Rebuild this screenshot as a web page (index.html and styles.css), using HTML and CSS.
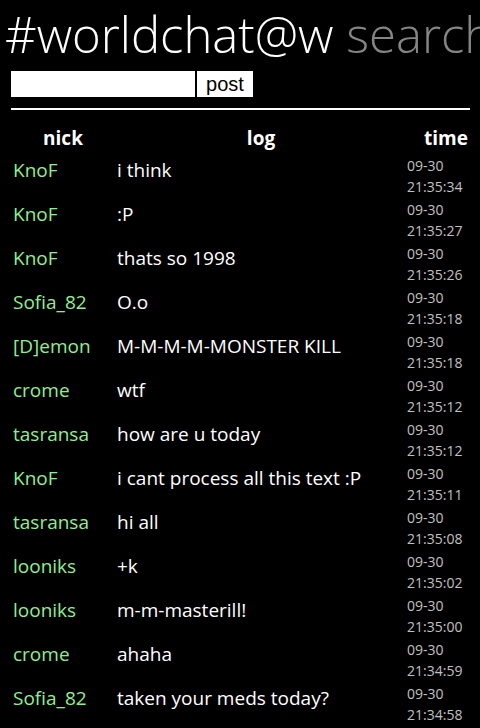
FILE: index.html
```html
<!DOCTYPE html>
<html lang="en">
<head>
  <meta charset="UTF-8">
  <title>#worldchat</title>
  <link rel="stylesheet" href="styles.css">
</head>
<body>
<div class="page">
  <h1 class="title">#worldchat@w <span class="dim">search</span></h1>
  <form class="postbar" onsubmit="return false">
    <input class="msg" type="text">
    <button class="post">post</button>
  </form>
  <hr class="rule">
  <table class="log">
    <thead>
      <tr><th class="c-nick">nick</th><th class="c-log">log</th><th class="c-time">time</th></tr>
    </thead>
    <tbody>
      <tr><td class="nick">KnoF</td><td class="text">i think</td><td class="time">09-30<br>21:35:34</td></tr>
      <tr><td class="nick">KnoF</td><td class="text">:P</td><td class="time">09-30<br>21:35:27</td></tr>
      <tr><td class="nick">KnoF</td><td class="text">thats so 1998</td><td class="time">09-30<br>21:35:26</td></tr>
      <tr><td class="nick">Sofia_82</td><td class="text">O.o</td><td class="time">09-30<br>21:35:18</td></tr>
      <tr><td class="nick">[D]emon</td><td class="text">M-M-M-M-MONSTER KILL</td><td class="time">09-30<br>21:35:18</td></tr>
      <tr><td class="nick">crome</td><td class="text">wtf</td><td class="time">09-30<br>21:35:12</td></tr>
      <tr><td class="nick">tasransa</td><td class="text">how are u today</td><td class="time">09-30<br>21:35:12</td></tr>
      <tr><td class="nick">KnoF</td><td class="text">i cant process all this text :P</td><td class="time">09-30<br>21:35:11</td></tr>
      <tr><td class="nick">tasransa</td><td class="text">hi all</td><td class="time">09-30<br>21:35:08</td></tr>
      <tr><td class="nick">looniks</td><td class="text">+k</td><td class="time">09-30<br>21:35:02</td></tr>
      <tr><td class="nick">looniks</td><td class="text">m-m-masterill!</td><td class="time">09-30<br>21:35:00</td></tr>
      <tr><td class="nick">crome</td><td class="text">ahaha</td><td class="time">09-30<br>21:34:59</td></tr>
      <tr><td class="nick">Sofia_82</td><td class="text">taken your meds today?</td><td class="time">09-30<br>21:34:58</td></tr>
    </tbody>
  </table>
</div>
</body>
</html>
```

FILE: styles.css
```css
html, body { margin: 0; padding: 0; background: #000; color: #fff; font-family: "Open Sans", "Noto Sans", sans-serif; overflow: hidden; }
.page { width: 480px; }
.title { margin: 0; padding: 6px 0 0 5px; font-size: 49px; font-weight: 300; line-height: 56px; white-space: nowrap; }
.dim { color: #858585; }
.postbar { display: flex; gap: 2px; margin: 9px 0 0 11px; height: 26px; }
.msg { width: 184px; height: 26px; box-sizing: border-box; border: none; margin: 0; padding: 0 4px; background: #fff; }
.post { height: 26px; width: 56px; border: none; margin: 0; padding: 0; background: #fff; color: #000; font-family: "Liberation Sans", Arial, sans-serif; font-size: 20px; }
.rule { margin: 11px 10px 0 11px; border: none; border-top: 2px solid #fff; height: 0; }
.log { margin: 12px 0 0 11px; width: 459px; border-collapse: collapse; table-layout: fixed; }
.log th { font-size: 19px; font-weight: 700; height: 32px; padding: 0; vertical-align: middle; }
.c-nick { width: 104px; text-align: center; }
.c-log { text-align: center; }
.c-time { width: 61px; text-align: right; padding-right: 2px !important; }
.log td { height: 44px; padding: 0; vertical-align: top; box-sizing: border-box; }
.nick { color: #90ee90; font-size: 19px; line-height: 21px; padding: 6px 0 0 2px !important; }
.text { font-size: 19px; line-height: 21px; padding: 6px 0 0 2px !important; }
.time { color: #c0c0c0; font-size: 14px; line-height: 21px; padding: 1px 0 0 0 !important; white-space: nowrap; }
```
